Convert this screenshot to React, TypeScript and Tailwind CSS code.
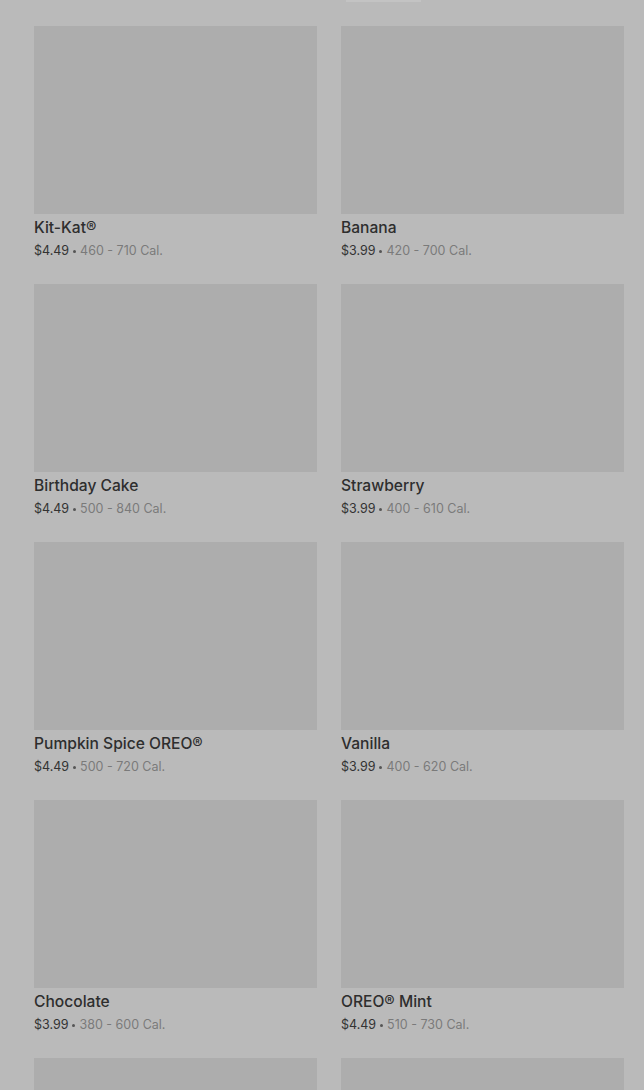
const items = [
  { name: 'Kit-Kat®', price: '$4.49', cal: '460 - 710 Cal.' },
  { name: 'Banana', price: '$3.99', cal: '420 - 700 Cal.' },
  { name: 'Birthday Cake', price: '$4.49', cal: '500 - 840 Cal.' },
  { name: 'Strawberry', price: '$3.99', cal: '400 - 610 Cal.' },
  { name: 'Pumpkin Spice OREO®', price: '$4.49', cal: '500 - 720 Cal.' },
  { name: 'Vanilla', price: '$3.99', cal: '400 - 620 Cal.' },
  { name: 'Chocolate', price: '$3.99', cal: '380 - 600 Cal.' },
  { name: 'OREO® Mint', price: '$4.49', cal: '510 - 730 Cal.' },
  { name: '', price: '', cal: '' },
  { name: '', price: '', cal: '' },
];

function Card({ name, price, cal }: { name: string; price: string; cal: string }) {
  return (
    <div>
      <div className="h-[188px] bg-[#adadad]" />
      {name && (
        <>
          <p className="mt-[4px] text-[15.6px] leading-[20px] font-medium text-[#2e2e2e]">{name}</p>
          <p className="mt-[4px] text-[12.5px] leading-[18px] text-[#7a7a7a]">
            <span className="text-[#333]">{price}</span>
            <span className="inline-block w-[3px] h-[3px] mx-[4px] rounded-full bg-[#555] align-middle" />
            {cal}
          </p>
        </>
      )}
    </div>
  );
}

export default function App() {
  return (
    <div
      className="h-[1090px] overflow-hidden bg-[#bababa]"
      style={{ fontFamily: 'Inter, "Noto Sans", sans-serif' }}
    >
      <div className="h-[2px] w-[75px] ml-[346px] bg-[#c3c3c3]" />
      <div className="grid grid-cols-2 gap-x-6 gap-y-[24px] pl-[34px] pr-[20px] pt-[24px]">
        {items.map((it, i) => (
          <Card key={i} {...it} />
        ))}
      </div>
    </div>
  );
}
